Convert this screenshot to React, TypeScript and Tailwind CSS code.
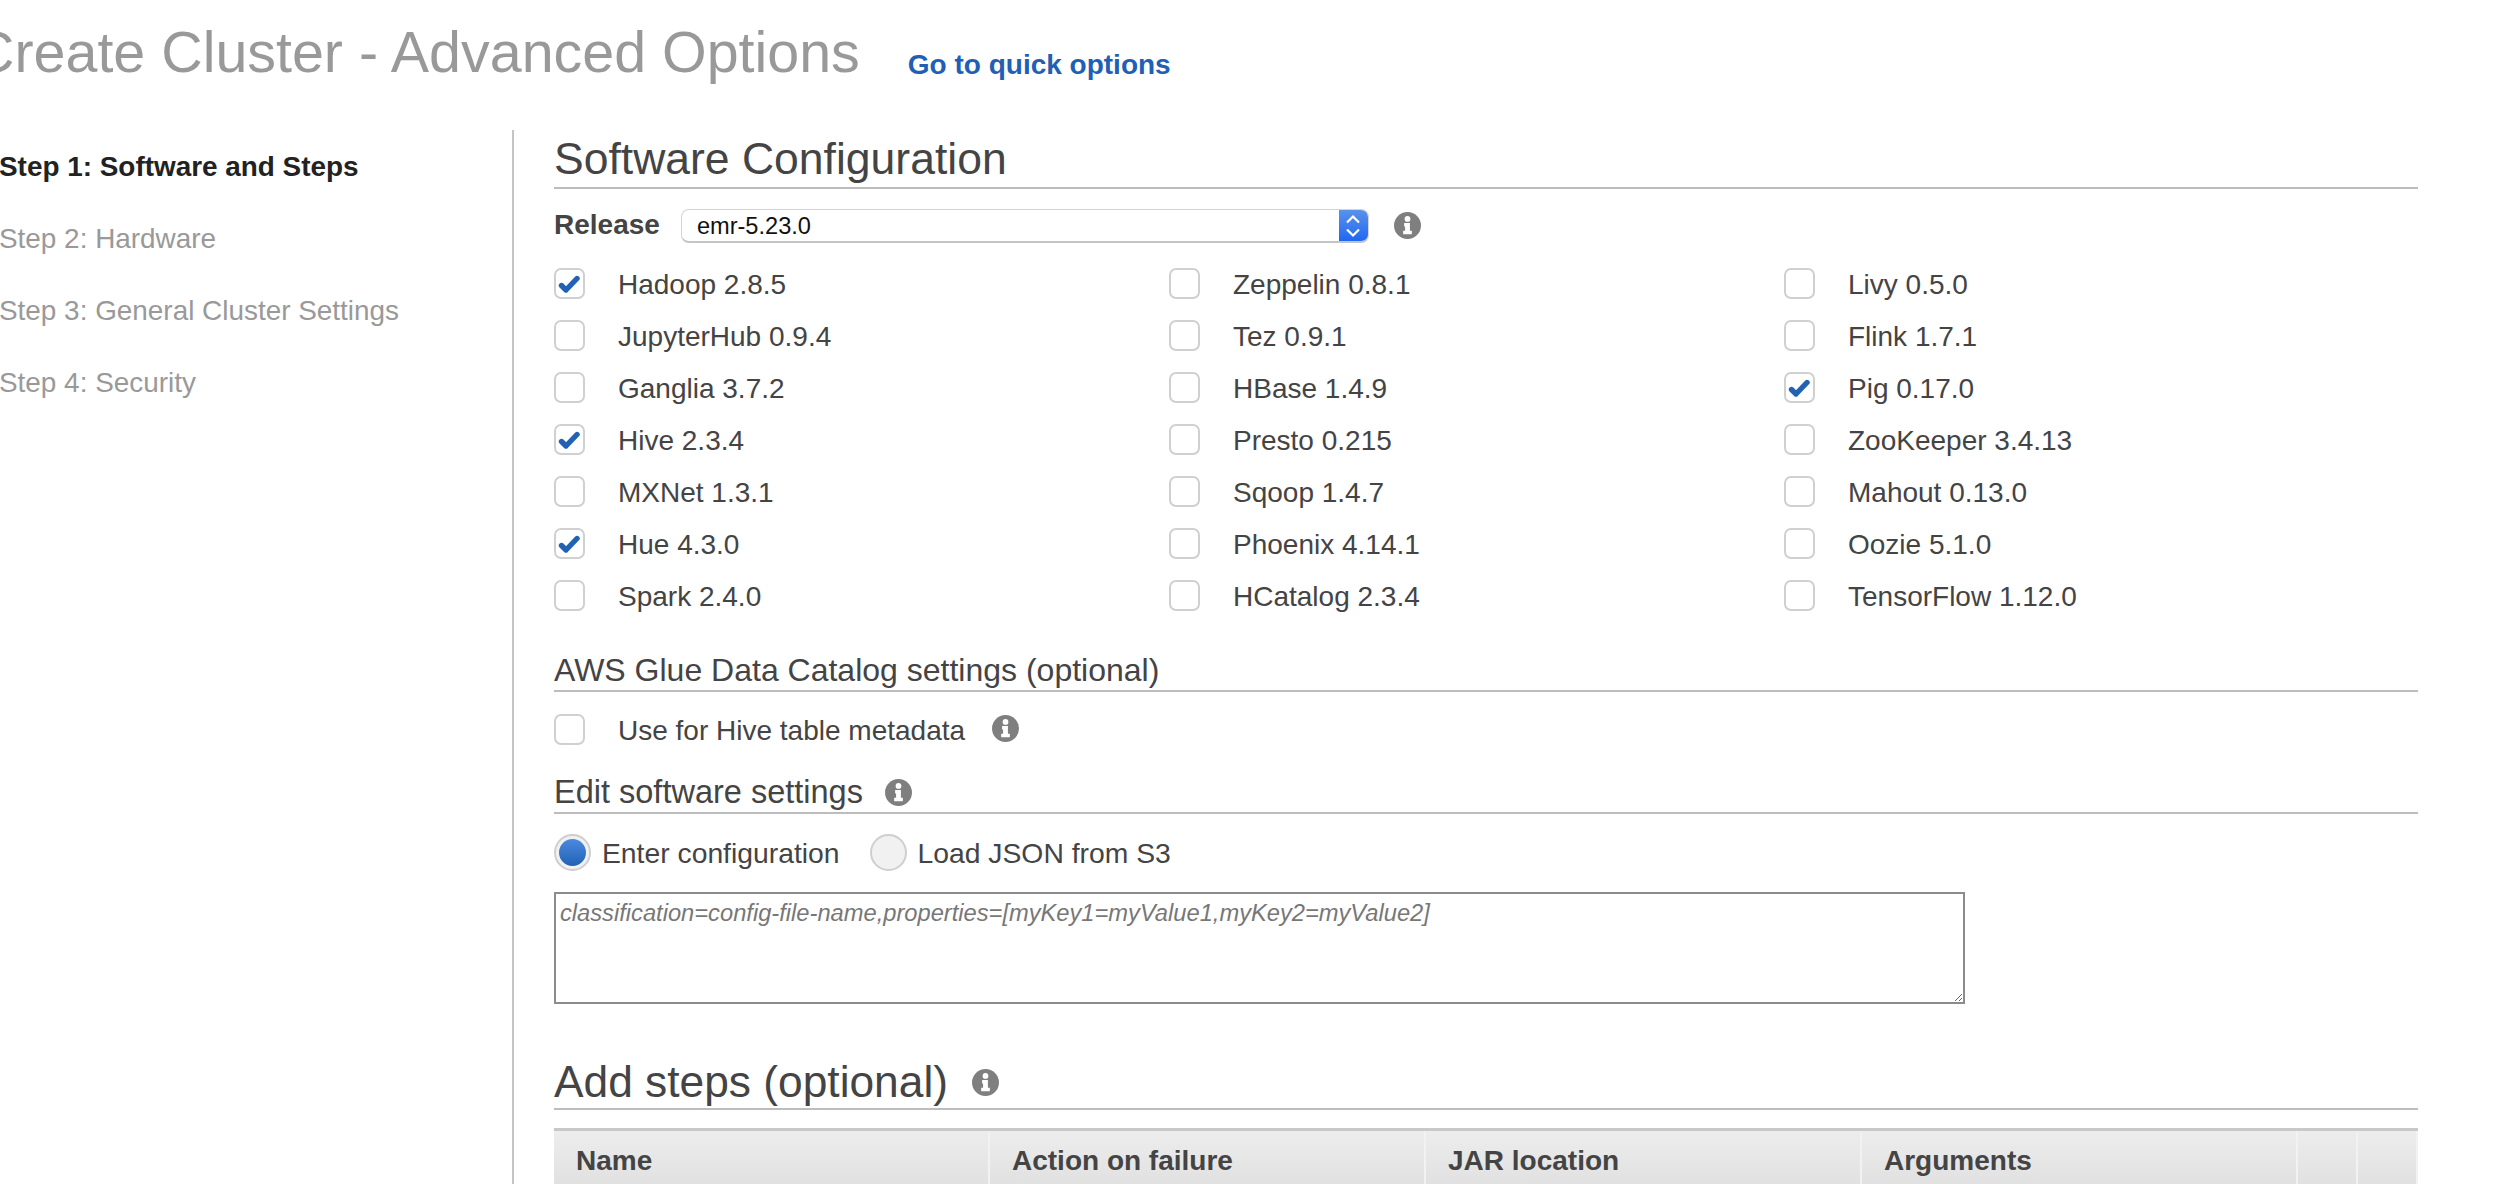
import { ReactNode } from "react";

const font = "font-['Liberation_Sans','Helvetica',sans-serif]";

const steps = [
  "Step 1: Software and Steps",
  "Step 2: Hardware",
  "Step 3: General Cluster Settings",
  "Step 4: Security",
];

const apps: [string, boolean][] = [
  ["Hadoop 2.8.5", true],
  ["Zeppelin 0.8.1", false],
  ["Livy 0.5.0", false],
  ["JupyterHub 0.9.4", false],
  ["Tez 0.9.1", false],
  ["Flink 1.7.1", false],
  ["Ganglia 3.7.2", false],
  ["HBase 1.4.9", false],
  ["Pig 0.17.0", true],
  ["Hive 2.3.4", true],
  ["Presto 0.215", false],
  ["ZooKeeper 3.4.13", false],
  ["MXNet 1.3.1", false],
  ["Sqoop 1.4.7", false],
  ["Mahout 0.13.0", false],
  ["Hue 4.3.0", true],
  ["Phoenix 4.14.1", false],
  ["Oozie 5.1.0", false],
  ["Spark 2.4.0", false],
  ["HCatalog 2.3.4", false],
  ["TensorFlow 1.12.0", false],
];

function InfoIcon({ size = 27 }: { size?: number }) {
  return (
    <svg width={size} height={size} viewBox="0 0 28 28" className="shrink-0">
      <circle cx="14" cy="14" r="14" fill="#7f7f7f" />
      <circle cx="14" cy="7.2" r="3" fill="#fff" />
      <path d="M10.5 11.5h6v8h2v3.5h-9v-3.5h2v-4.5h-1z" fill="#fff" />
    </svg>
  );
}

function Checkbox({ checked, label }: { checked: boolean; label: string }) {
  return (
    <div className="flex h-[31px] items-center">
      <div className="flex h-[31px] w-[31px] shrink-0 items-center justify-center rounded-[7px] border-2 border-[#d0d0d0] bg-white">
        {checked && (
          <svg width="23" height="20" viewBox="0 0 23 20">
            <path d="M3.500 11.500l4.500 4.500L19 4.500" fill="none" stroke="#2262b4" strokeWidth="5.400" strokeLinecap="round" strokeLinejoin="round" />
          </svg>
        )}
      </div>
      <span className="ml-[33px] pt-[1px] text-[28px] leading-[31px] text-[#444]">{label}</span>
    </div>
  );
}

function Heading({ children, className }: { children: ReactNode; className: string }) {
  return <div className={`flex items-center border-b-2 border-[#bdbdbd] text-[#444] ${className}`}>{children}</div>;
}

function Radio({ on, label }: { on: boolean; label: string }) {
  return (
    <div className="flex h-[37px] items-center">
      <div className="flex h-[37px] w-[37px] items-center justify-center rounded-full border-2 border-[#cfcfcf] bg-[#f1f1f1]">
        {on && <div className="h-[27px] w-[27px] rounded-full bg-gradient-to-b from-[#4a8ae0] to-[#2262b4]" />}
      </div>
      <span className="ml-[11px] pt-[2px] text-[28.300px] leading-[37px] text-[#444]">{label}</span>
    </div>
  );
}

export default function App() {
  return (
    <div className={`h-[1184px] w-[2510px] overflow-hidden bg-white ${font}`}>
      <div className="flex h-[130px] items-start">
        <h1 className="-ml-[27px] mt-[17px] text-[57.400px] leading-[70px] whitespace-nowrap text-[#999]">
          Create Cluster - Advanced Options
        </h1>
        <a className="ml-[48px] mt-[48px] text-[28px] leading-[34px] font-bold whitespace-nowrap text-[#1f5fb5]">
          Go to quick options
        </a>
      </div>
      <div className="flex">
        <nav className="h-[1054px] w-[514px] shrink-0 border-r-2 border-[#c4c4c4] pt-[19px]">
          {steps.map((s, i) => (
            <div key={s} className={`-ml-[1px] h-[72px] text-[27.900px] leading-[36px] ${i === 0 ? "font-bold text-[#222]" : "text-[#999]"}`}>
              {s}
            </div>
          ))}
        </nav>
        <main className="ml-[40px] w-[1864px]">
          <Heading className="h-[59px] pt-[2px] text-[44.500px]">Software Configuration</Heading>

          <div className="mt-[20px] flex h-[34px] items-center">
            <span className="-mt-[2px] text-[28px] font-bold text-[#444]">Release</span>
            <div className="ml-[21px] flex h-[34px] w-[688px] items-center overflow-hidden rounded-[8px] border border-[#d4d4d4] border-b-2 border-b-[#c4c4c4] bg-white">
              <span className="ml-[15px] flex-1 pt-[2px] text-[23.600px] text-[#111]">emr-5.23.0</span>
              <div className="flex h-[34px] w-[29px] items-center justify-center bg-gradient-to-b from-[#5b93ea] to-[#1a63f2]">
                <svg width="16" height="26" viewBox="0 0 16 26">
                  <path d="M2 9.500L8 3.500l6 6M2 16.500l6 6 6-6" fill="none" stroke="#fff" strokeWidth="2.200" />
                </svg>
              </div>
            </div>
            <span className="ml-[25px] -mt-[2px]">
              <InfoIcon />
            </span>
          </div>

          <div className="mt-[25px] grid grid-cols-[615px_615px_1fr] auto-rows-[52px]">
            {apps.map(([name, checked]) => (
              <Checkbox key={name} label={name} checked={checked} />
            ))}
          </div>

          <Heading className="mt-[18px] h-[42px] text-[32px]">AWS Glue Data Catalog settings (optional)</Heading>

          <div className="mt-[22px] flex items-center">
            <Checkbox checked={false} label="Use for Hive table metadata" />
            <span className="ml-[27px] -mt-[2px]">
              <InfoIcon />
            </span>
          </div>

          <Heading className="mt-[25px] h-[44px] pt-[3px] text-[32.500px]">
            Edit software settings
            <span className="ml-[22px]">
              <InfoIcon />
            </span>
          </Heading>

          <div className="mt-[20px] flex gap-[30px]">
            <Radio on label="Enter configuration" />
            <Radio on={false} label="Load JSON from S3" />
          </div>

          <textarea
            placeholder="classification=config-file-name,properties=[myKey1=myValue1,myKey2=myValue2]"
            className="mt-[21px] block h-[112px] w-[1411px] border-2 border-[#8c8c8c] px-[4px] py-[2px] text-[23.700px] italic placeholder:text-[#777]"
          />

          <Heading className="mt-[56px] h-[50px] pb-[3px] text-[44.300px]">
            Add steps (optional)
            <span className="ml-[24px]">
              <InfoIcon />
            </span>
          </Heading>

          <div className="mt-[18px] grid h-[60px] grid-cols-[436px_436px_436px_436px_60px_1fr] border-t-[3px] border-[#c8c8c8] bg-gradient-to-b from-[#ededed] to-[#e0e0e0] text-[28px] leading-[34px] font-bold text-[#444]">
            {["Name", "Action on failure", "JAR location", "Arguments", "", ""].map((c, i) => (
              <div key={i} className="border-r-2 border-[#f2f2f2] pl-[22px] pt-[13px]">
                {c}
              </div>
            ))}
          </div>
        </main>
      </div>
    </div>
  );
}
